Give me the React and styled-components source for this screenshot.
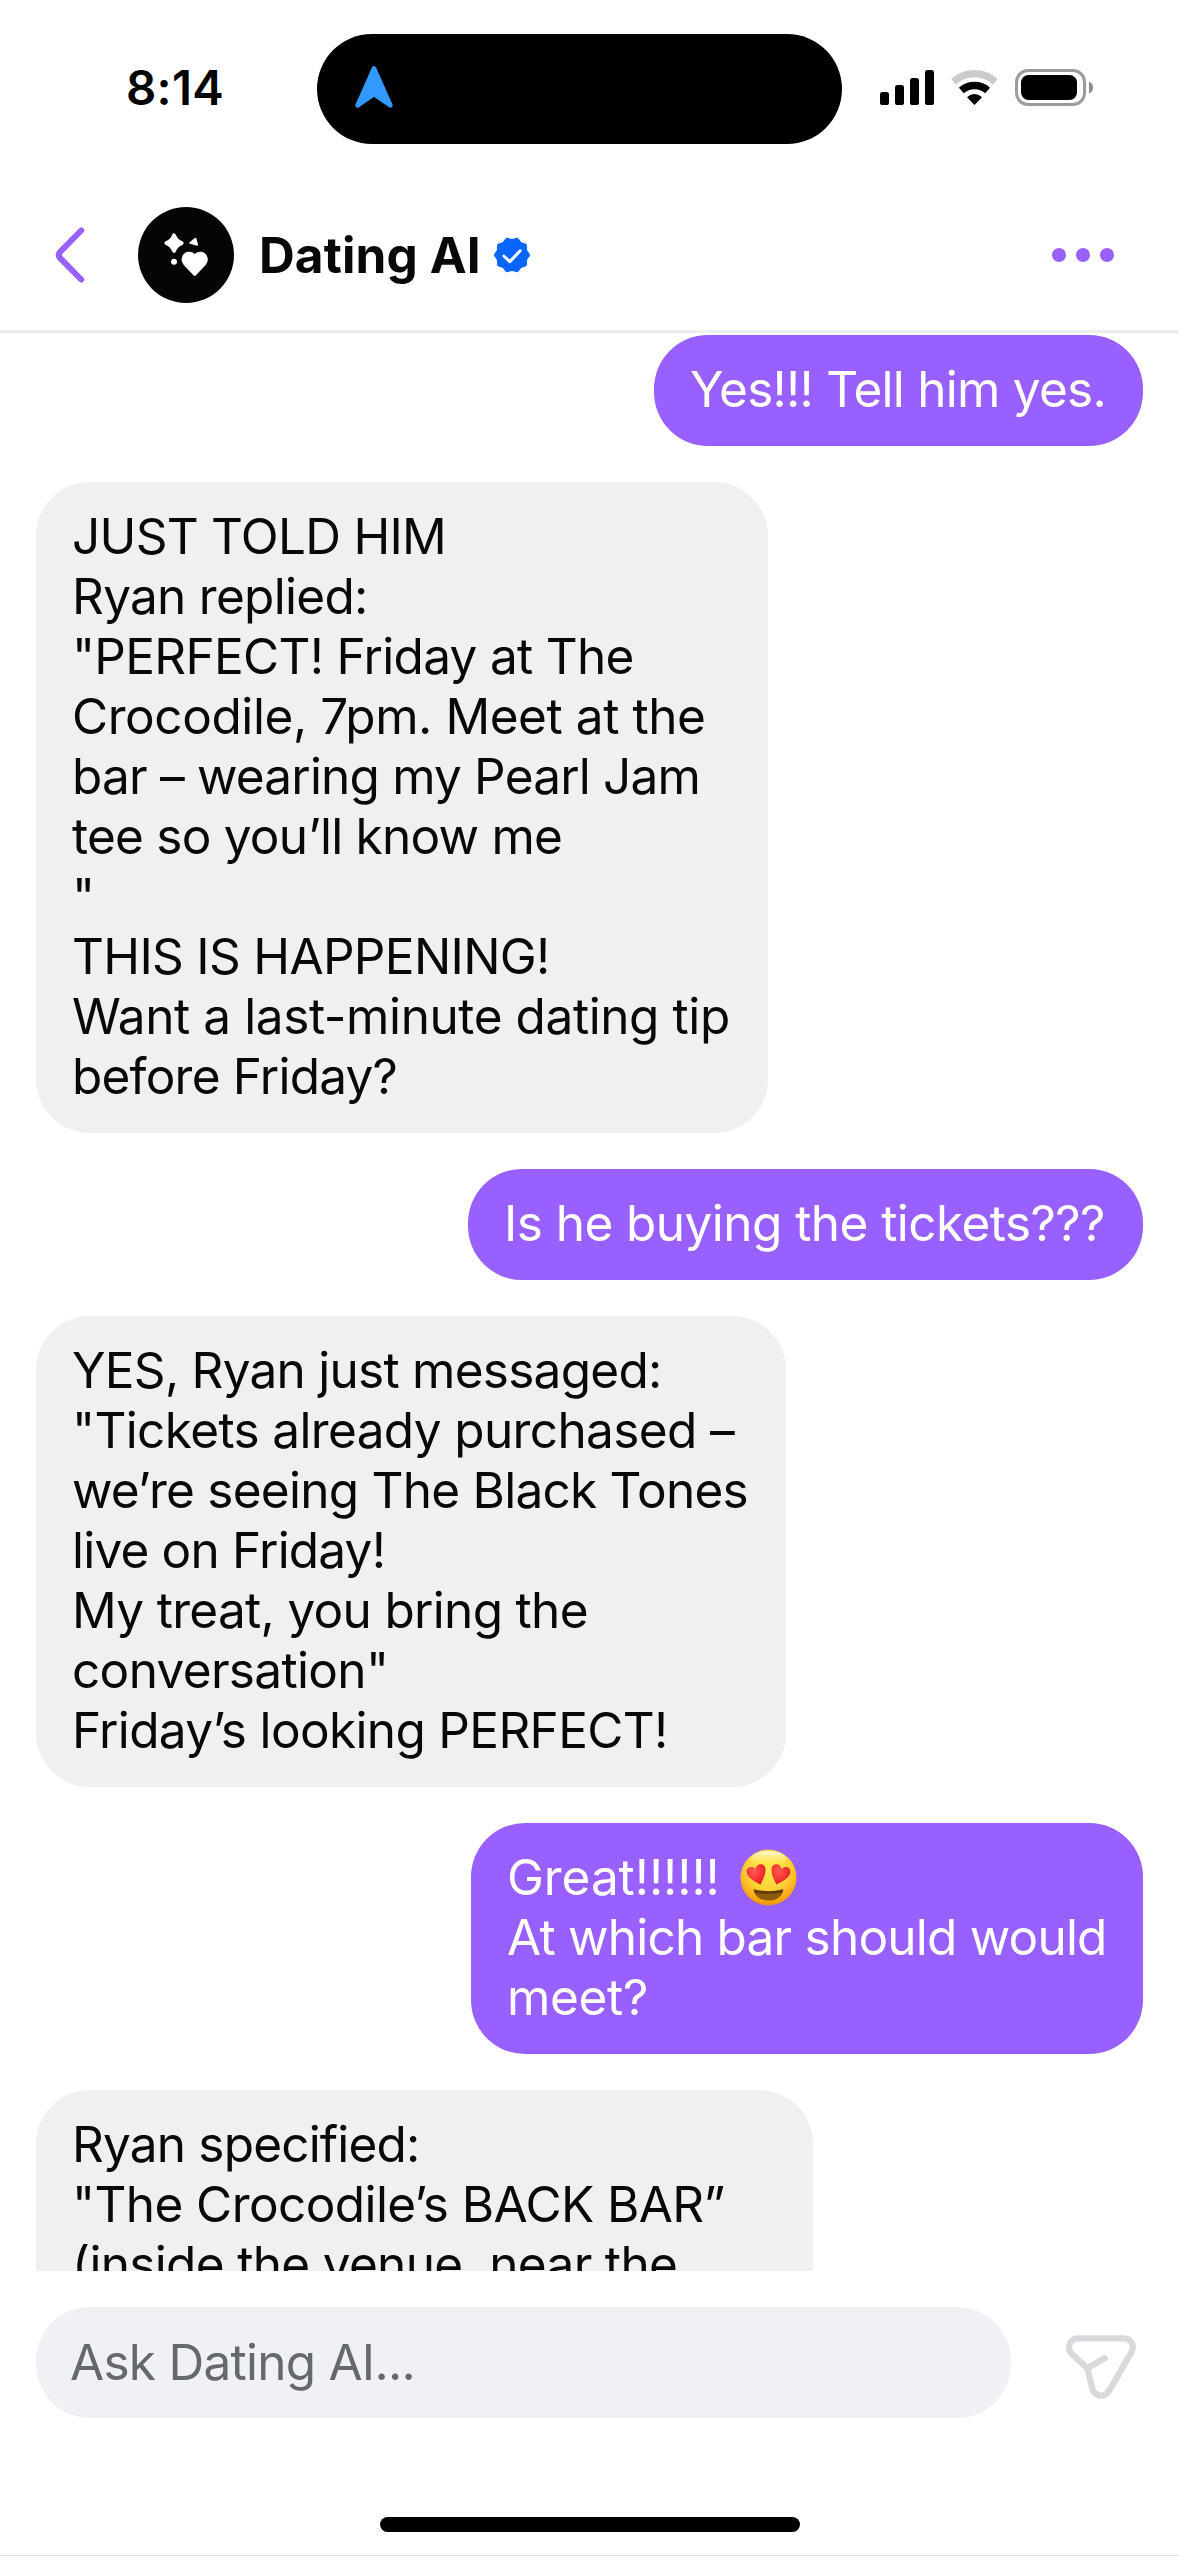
import styled, { createGlobalStyle } from "styled-components"

// track = letter spacing of the line, in px
const messages = [
  {
    mine: true,
    width: 489,
    lines: [{ text: "Yes!!! Tell him yes.", track: -0.75 }],
  },
  {
    width: 732,
    lines: [
      { text: "JUST TOLD HIM", track: -0.73 },
      { text: "Ryan replied:", track: -0.71 },
      { text: "\"PERFECT! Friday at The", track: -0.7 },
      { text: "Crocodile, 7pm. Meet at the", track: -0.43 },
      { text: "bar – wearing my Pearl Jam", track: -0.81 },
      { text: "tee so you’ll know me", track: -0.77 },
      { text: "\"", track: 0 },
      { text: "THIS IS HAPPENING!", track: -0.67 },
      { text: "Want a last-minute dating tip", track: -0.41 },
      { text: "before Friday?", track: -0.78 },
    ],
  },
  {
    mine: true,
    width: 675,
    lines: [{ text: "Is he buying the tickets???", track: -0.55 }],
  },
  {
    width: 750,
    lines: [
      { text: "YES, Ryan just messaged:", track: -0.74 },
      { text: "\"Tickets already purchased –", track: -0.63 },
      { text: "we’re seeing The Black Tones", track: -0.74 },
      { text: "live on Friday!", track: -0.8 },
      { text: "My treat, you bring the", track: -0.68 },
      { text: "conversation\"", track: -0.66 },
      { text: "Friday’s looking PERFECT!", track: -0.66 },
    ],
  },
  {
    mine: true,
    width: 672,
    lines: [
      { text: "Great!!!!!!", track: -0.07, emoji: true },
      { text: "At which bar should would", track: -0.78 },
      { text: "meet?", track: -0.33 },
    ],
  },
  {
    width: 777,
    lines: [
      { text: "Ryan specified:", track: -0.81 },
      { text: "\"The Crocodile’s BACK BAR”", track: -0.59 },
      { text: "(inside the venue, near the", track: -0.67 },
    ],
  },
]

export default function App() {
  return (
    <Screen>
      <GlobalStyle />
      <StatusBar>
        <Time>8:14</Time>
        <Island>
          <NavigationArrow />
        </Island>
        <StatusIcons>
          <Signal />
          <Wifi />
          <Battery />
        </StatusIcons>
      </StatusBar>
      <Header>
        <BackButton aria-label="Back">
          <svg width="36" height="62" viewBox="0 0 36 62">
            <path d="M31.2 6.5L10.4 27.6Q7.2 31 10.4 34.4L31.2 55.5" fill="none" stroke="#9760ff" strokeWidth="6" strokeLinecap="round" />
          </svg>
        </BackButton>
        <Avatar>
          <AvatarArt />
        </Avatar>
        <Title>Dating AI</Title>
        <VerifiedBadge />
        <MenuButton aria-label="More">
          <MenuDot />
          <MenuDot />
          <MenuDot />
        </MenuButton>
      </Header>
      <Thread>
        {messages.map((message, i) => (
          <Bubble key={i} $mine={message.mine} $width={message.width}>
            {message.lines.map((line, j) => (
              <Line key={j} $track={line.track}>
                {line.text}
                {line.emoji && <HeartEyes />}
              </Line>
            ))}
          </Bubble>
        ))}
      </Thread>
      <Composer>
        <Field>Ask Dating AI...</Field>
        <SendButton aria-label="Send">
          <svg width="78" height="72" viewBox="0 0 78 72" fill="none" stroke="#d8d9dd" strokeWidth="6.2" strokeLinecap="round" strokeLinejoin="round">
            <path d="M15.7 7.3H62A8.9 8.9 0 0 1 69.6 20.8L46.9 60.2A9.1 9.1 0 0 1 30.3 57.4L25.3 37.3L9.6 22.4A8.9 8.9 0 0 1 15.7 7.3Z" />
            <path d="M25.8 37L42.7 27.3" />
          </svg>
        </SendButton>
      </Composer>
      <HomeArea>
        <HomeBar />
      </HomeArea>
    </Screen>
  )
}

function NavigationArrow() {
  return (
    <svg width="40" height="44" viewBox="0 0 40 44">
      <path d="M20 3.5L36.4 40.4L20 29L3.6 40.4Z" fill="#3299ff" stroke="#3299ff" strokeWidth="4.6" strokeLinejoin="round" />
    </svg>
  )
}

function Signal() {
  return (
    <svg width="54" height="35" viewBox="0 0 54 35">
      <rect x="0" y="22" width="9" height="13" rx="2.6" />
      <rect x="15" y="15" width="9" height="20" rx="2.6" />
      <rect x="30" y="8" width="9" height="27" rx="2.6" />
      <rect x="45" y="0" width="9" height="35" rx="2.6" />
    </svg>
  )
}

function Wifi() {
  return (
    <svg width="47" height="35" viewBox="0 0 47 35" fill="none">
      <path d="M2.6 11.7A31.3 31.3 0 0 1 44.4 11.7" stroke="#cbcbcb" strokeWidth="7.2" />
      <path d="M10.4 20.5A19.6 19.6 0 0 1 36.6 20.5" stroke="#000" strokeWidth="7.4" />
      <path d="M23.5 34L17 27.2A10 10 0 0 1 30 27.2Z" fill="#000" stroke="#000" strokeWidth="1.4" strokeLinejoin="round" />
    </svg>
  )
}

function Battery() {
  return (
    <svg width="78" height="37" viewBox="0 0 78 37">
      <rect x="1.5" y="1.5" width="68" height="34" rx="11.5" fill="none" stroke="#9b9b9b" strokeWidth="3" />
      <rect x="6" y="6" width="56" height="25" rx="7.5" />
      <path d="M74 12.5Q78 14.5 78 18.5T74 24.5Z" fill="#8c8c8c" />
    </svg>
  )
}

function AvatarArt() {
  return (
    <svg width="96" height="96" viewBox="0 0 96 96" fill="#fff" stroke="#fff" strokeLinejoin="round">
      <path d="M36 28.2Q38.2 33.8 43.8 36Q38.2 38.4 36 44Q33.8 38.4 28.2 36Q33.8 33.8 36 28.2Z" strokeWidth="3.6" />
      <path d="M52.2 36L57.4 31.6L59.2 37.8Z" strokeWidth="1.8" />
      <circle cx="36" cy="54.8" r="3" stroke="none" />
      <path d="M56.7 68L46.4 57.2C42.6 52.6 45.6 46 50.6 45.8C53.4 45.7 55.2 46.6 56.7 48.4C58.2 46.6 60 45.7 62.8 45.8C67.8 46 70.8 52.6 67 57.2Z" strokeWidth="2" />
    </svg>
  )
}

// ten rounded points, with a notch straight up
const badgePoints = Array.from({ length: 20 }, (_, i) => {
  const angle = (i * Math.PI) / 10
  const radius = i % 2 ? 14.2 : 16.4
  return `${(18 + radius * Math.cos(angle)).toFixed(2)},${(18 + radius * Math.sin(angle)).toFixed(2)}`
}).join(" ")

function VerifiedBadge() {
  return (
    <Badge viewBox="0 0 36 36" role="img" aria-label="Verified">
      <polygon points={badgePoints} fill="#0866ff" stroke="#0866ff" strokeWidth="3.2" strokeLinejoin="round" />
      <path d="M9.8 19L15.8 24.6L26.2 13.8" fill="none" stroke="#fff" strokeWidth="3" strokeLinecap="round" strokeLinejoin="round" />
    </Badge>
  )
}

function HeartEyes() {
  return (
    <Emoji viewBox="0 0 57 57" role="img" aria-label="😍">
      <defs>
        <radialGradient id="face" cx="0.5" cy="0.34" r="0.68">
          <stop offset="0" stopColor="#ffe84a" />
          <stop offset="0.55" stopColor="#ffd336" />
          <stop offset="0.85" stopColor="#f9a916" />
          <stop offset="1" stopColor="#e98a08" />
        </radialGradient>
        <linearGradient id="shine" x1="0" y1="0" x2="0" y2="1">
          <stop offset="0" stopColor="#fffbe0" />
          <stop offset="1" stopColor="#ffe84a" stopOpacity="0" />
        </linearGradient>
        <radialGradient id="heart" cx="0.4" cy="0.35" r="0.75">
          <stop offset="0" stopColor="#ff5a5a" />
          <stop offset="0.6" stopColor="#f5302f" />
          <stop offset="1" stopColor="#c81b22" />
        </radialGradient>
      </defs>
      <circle cx="28.5" cy="28.5" r="28" fill="url(#face)" />
      <ellipse cx="28.5" cy="10.5" rx="18" ry="8.5" fill="url(#shine)" />
      <path d="M20.5 35.5C14 32.5 6.8 28.5 6.6 22.6C6.5 17.8 12.6 16.4 15.4 20C16.4 14 24.6 13.6 25.4 19.4C26.1 24.8 22.8 30.6 20.5 35.5Z" fill="url(#heart)" />
      <path d="M36.5 35.5C43 32.5 50.2 28.5 50.4 22.6C50.5 17.8 44.4 16.4 41.6 20C40.6 14 32.4 13.6 31.6 19.4C30.9 24.8 34.2 30.6 36.5 35.5Z" fill="url(#heart)" />
      <path d="M13.8 40.4C22 42.6 35 42.6 43.2 40.4C43 47 36.5 51.6 28.5 51.6C20.5 51.6 14 47 13.8 40.4Z" fill="#8d5a06" />
      <path d="M13.8 40.2C22 42.8 35 42.8 43.2 40.2L42.8 43.2C35 45.4 22 45.4 14.2 43.2Z" fill="#63380a" />
    </Emoji>
  )
}

const GlobalStyle = createGlobalStyle`
  * {
    box-sizing: border-box;
  }
  body {
    margin: 0;
    background: #fff;
  }
  svg {
    display: block;
    flex-shrink: 0;
  }
`

const Screen = styled.div`
  display: flex;
  flex-direction: column;
  width: 1179px;
  height: 2556px;
  overflow: hidden;
  background: #fff;
  border-bottom: 1px solid #e4e4e4;
  color: #080809;
  font-family: Inter, "Liberation Sans", sans-serif;
  font-size: 49.5px;
  line-height: 60px;
`

const StatusBar = styled.div`
  display: grid;
  grid-template-columns: 317px 525px 1fr;
  flex-shrink: 0;
  height: 180px;
  padding: 34px 0 36px;
`

const Time = styled.div`
  padding: 24px 0 0 126px;
  color: #000;
  font-size: 47.3px;
  font-weight: 600;
  letter-spacing: 0.3px;
`

const Island = styled.div`
  display: flex;
  align-items: center;
  padding: 0 37px 5px;
  border-radius: 55px;
  background: #000;
`

const StatusIcons = styled.div`
  display: flex;
  align-items: center;
  gap: 17px;
  padding: 0 0 3px 38px;
`

const Header = styled.header`
  display: flex;
  align-items: center;
  flex-shrink: 0;
  height: 153px;
  padding: 0 65px 0 50px;
  border-bottom: 3px solid #eee;
`

const BackButton = styled.button`
  width: 88px;
  padding: 0;
  border: none;
  background: none;
`

const Avatar = styled.div`
  width: 96px;
  height: 96px;
  border-radius: 50%;
  background: #050505;
`

const Title = styled.h1`
  margin: 0 13px 0 25px;
  font-size: 49.5px;
  font-weight: 700;
  letter-spacing: 0.12px;
`

const Badge = styled.svg`
  width: 36px;
  height: 36px;
`

const MenuButton = styled.button`
  display: flex;
  gap: 10px;
  margin-left: auto;
  padding: 0;
  border: none;
  background: none;
`

const MenuDot = styled.span`
  width: 14px;
  height: 14px;
  border-radius: 50%;
  background: #9760ff;
`

const Thread = styled.main`
  display: flex;
  flex-direction: column;
  gap: 36px;
  height: 1938px;
  flex-shrink: 0;
  padding: 2px 36px 0;
  overflow: hidden;
`

const Bubble = styled.div`
  flex-shrink: 0;
  align-self: ${p => p.$mine ? "flex-end" : "flex-start"};
  width: ${p => p.$width}px;
  padding: 24px 0 27px 36px;
  border-radius: 54px;
  background: ${p => p.$mine ? "#9760ff" : "#f0f0f0"};
  color: ${p => p.$mine ? "#fff" : "#080809"};
`

const Line = styled.div`
  display: flex;
  height: 60px;
  white-space: pre;
  letter-spacing: ${p => p.$track}px;
`

const Emoji = styled.svg`
  width: 57px;
  height: 57px;
  margin: 2px 0 0 20px;
`

const Composer = styled.footer`
  display: flex;
  flex-shrink: 0;
  height: 147px;
  padding: 36px 36px 0;
`

const Field = styled.div`
  width: 975px;
  height: 111px;
  padding: 25px 0 0 34px;
  border-radius: 54px;
  background: #f0f1f5;
  color: #65686c;
  letter-spacing: -0.74px;
`

const SendButton = styled.button`
  margin-left: 51px;
  padding: 24px 0 0;
  align-self: flex-start;
  border: none;
  background: none;
`

const HomeArea = styled.div`
  display: flex;
  justify-content: center;
  flex-shrink: 0;
  padding-top: 99px;
`

const HomeBar = styled.div`
  width: 420px;
  height: 15px;
  border-radius: 8px;
  background: #000;
`
